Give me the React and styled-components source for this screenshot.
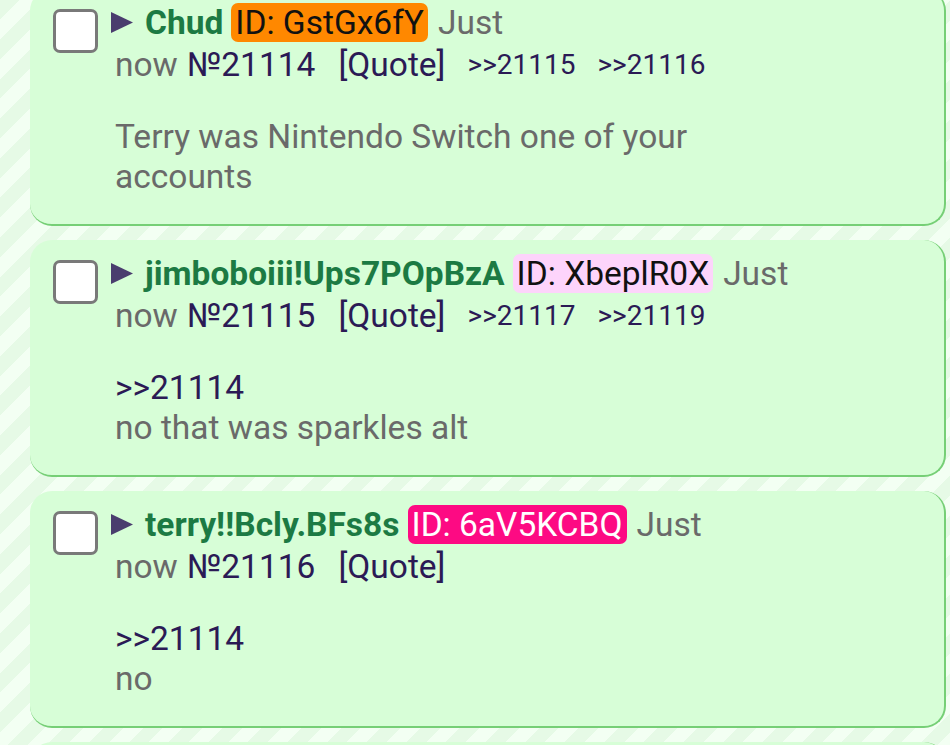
import React from "react";
import styled, { createGlobalStyle } from "styled-components";

const Global = createGlobalStyle`
  html, body {
    margin: 0;
    padding: 0;
    height: 100%;
    overflow: hidden;
  }
  body {
    font-family: Roboto, "Noto Sans", "Liberation Sans", sans-serif;
    background: repeating-linear-gradient(
      135deg,
      #e6fae6 0px,
      #e6fae6 14px,
      #f3fff3 14px,
      #f3fff3 28px
    );
  }
`;

const Thread = styled.div`
  display: flex;
  flex-direction: column;
  gap: 14px;
  margin-top: -11px;
  padding-left: 30px;
  padding-right: 4px;
`;

const Card = styled.article`
  display: flex;
  gap: 13px;
  background: #d7fed7;
  border-right: 2px solid #76cf76;
  border-bottom: 2px solid #76cf76;
  border-radius: 22px;
  padding: 12px 20px 27px 23px;
`;

const Check = styled.span`
  flex: none;
  box-sizing: border-box;
  width: 45px;
  height: 44px;
  margin-top: 8px;
  background: #ffffff;
  border: 3px solid #797979;
  border-radius: 7px;
`;

const Content = styled.div`
  display: flex;
  flex-direction: column;
  min-width: 0;
`;

const HeadRow = styled.div`
  display: flex;
  align-items: center;
  height: 42px;
  font-size: 33.5px;
  white-space: nowrap;
  padding-left: ${(p) => (p.$indent ? "4px" : "0")};
`;

const Arrow = styled.svg`
  width: 22px;
  height: 21px;
  margin-right: 12px;
  flex: none;
`;

const Name = styled.span`
  font-weight: 700;
  color: #1c7a43;
  margin-right: 8px;
`;

const Badge = styled.span`
  display: inline-block;
  line-height: 39px;
  padding: 0 4px;
  border-radius: 7px;
  margin-right: 10px;
  background: ${(p) => p.$bg};
  color: ${(p) => p.$fg};
`;

const Muted = styled.span`
  color: #6a6a6a;
`;

const PostNo = styled.span`
  color: #2b1a55;
  margin-left: 9px;
`;

const QuoteBtn = styled.span`
  color: #2b1a55;
  margin-left: 23px;
`;

const BackLink = styled.span`
  color: #2b1a55;
  font-size: 28px;
  margin-left: 22px;
`;

const Body = styled.div`
  margin-top: 32px;
  padding-left: 4px;
  max-width: 640px;
  font-size: 33.5px;
  line-height: 40px;
  color: #6a6a6a;
`;

const InlineQuote = styled.div`
  color: #2b1a55;
`;

const posts = [
  {
    name: "Chud",
    id: "GstGx6fY",
    bg: "#ff8800",
    fg: "#111111",
    no: 21114,
    replies: [21115, 21116],
    quote: null,
    text: "Terry was Nintendo Switch one of your accounts",
  },
  {
    name: "jimboboiii!Ups7POpBzA",
    id: "XbeplR0X",
    bg: "#fdd4fb",
    fg: "#111111",
    no: 21115,
    replies: [21117, 21119],
    quote: 21114,
    text: "no that was sparkles alt",
  },
  {
    name: "terry!!Bcly.BFs8s",
    id: "6aV5KCBQ",
    bg: "#fd0a83",
    fg: "#ffffff",
    no: 21116,
    replies: [],
    quote: 21114,
    text: "no",
  },
  {
    name: "Chud",
    id: "GstGx6fY",
    bg: "#ff8800",
    fg: "#111111",
    no: 21117,
    replies: [],
    quote: 21115,
    text: "ok",
  },
];

function Post({ p }) {
  return (
    <Card>
      <Check />
      <Content>
        <HeadRow>
          <Arrow viewBox="0 0 22 21">
            <polygon points="0,0 22,10.5 0,21" fill="#4a3d6e" />
          </Arrow>
          <Name>{p.name}</Name>
          <Badge $bg={p.bg} $fg={p.fg}>
            ID: {p.id}
          </Badge>
          <Muted>Just</Muted>
        </HeadRow>
        <HeadRow $indent>
          <Muted>now</Muted>
          <PostNo>№{p.no}</PostNo>
          <QuoteBtn>[Quote]</QuoteBtn>
          {p.replies.map((r) => (
            <BackLink key={r}>&gt;&gt;{r}</BackLink>
          ))}
        </HeadRow>
        <Body>
          {p.quote && <InlineQuote>&gt;&gt;{p.quote}</InlineQuote>}
          {p.text}
        </Body>
      </Content>
    </Card>
  );
}

export default function App() {
  return (
    <>
      <Global />
      <Thread>
        {posts.map((p) => (
          <Post key={p.no} p={p} />
        ))}
      </Thread>
    </>
  );
}
